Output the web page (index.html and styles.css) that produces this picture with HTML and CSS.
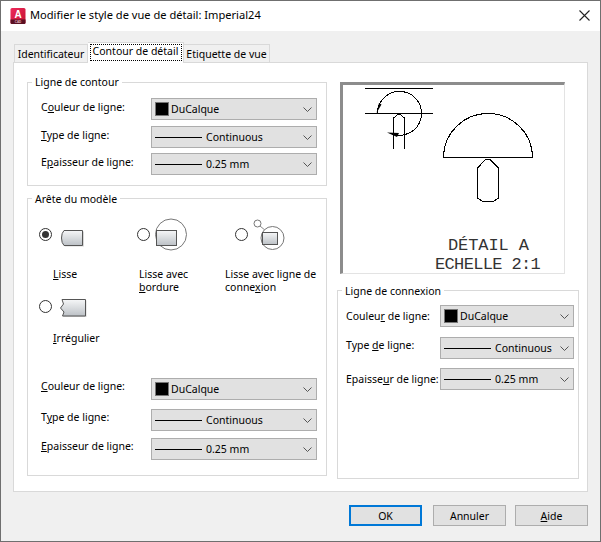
FILE: index.html
```html
<!DOCTYPE html>
<html lang="fr">
<head>
<meta charset="utf-8">
<title>Modifier le style de vue de détail</title>
<link rel="stylesheet" href="styles.css">
</head>
<body>
<svg class="defs" width="0" height="0">
  <defs>
    <linearGradient id="shade" x1="0" y1="0" x2="0" y2="1">
      <stop offset="0" stop-color="#f6f7f8"/>
      <stop offset="1" stop-color="#bcc1c6"/>
    </linearGradient>
    <linearGradient id="logo" x1="0" y1="0" x2="1" y2="1">
      <stop offset="0" stop-color="#ee2a5c"/>
      <stop offset="1" stop-color="#c4112f"/>
    </linearGradient>
    <symbol id="chev" viewBox="0 0 9 5">
      <path d="M0.5 0.5 L4.5 4.5 L8.5 0.5" fill="none" stroke="#555" stroke-width="1"/>
    </symbol>
  </defs>
</svg>
<div class="window">
  <header class="titlebar">
    <svg class="app-icon" viewBox="0 0 16 16" width="16" height="16">
      <rect x="0.5" y="0" width="15" height="16" rx="1.5" fill="url(#logo)"/>
      <path d="M0.5 11.5 H15.5 V14.5 a1.5 1.5 0 0 1 -1.5 1.5 H2 a1.5 1.5 0 0 1 -1.5 -1.5Z" fill="#5a1022"/>
      <text x="8" y="9.5" class="logo-a">A</text>
      <text x="8" y="15" class="logo-cad">CAD</text>
    </svg>
    <div class="title">Modifier le style de vue de détail: Imperial24</div>
    <svg class="close" viewBox="0 0 11 11" width="11" height="11">
      <path d="M0.5 0.5 L10.5 10.5 M10.5 0.5 L0.5 10.5" stroke="#222" stroke-width="1.1" fill="none"/>
    </svg>
  </header>

  <main class="content">
    <nav class="tabs">
      <div class="tab tab-first">Identificateur</div>
      <div class="tab tab-active"><span class="focus">Contour de détail</span></div>
      <div class="tab tab-last">Etiquette de vue</div>
    </nav>

    <section class="panel">
      <div class="col-left">
        <fieldset class="group group-outline">
          <legend>Ligne de contour</legend>
          <div class="row">
            <label>C<u>o</u>uleur de ligne:</label>
            <div class="combo"><span class="swatch"></span><span class="combo-text">DuCalque</span><svg class="chev"><use href="#chev"/></svg></div>
          </div>
          <div class="row">
            <label><u>T</u>ype de ligne:</label>
            <div class="combo"><span class="line"></span><span class="combo-text">Continuous</span><svg class="chev"><use href="#chev"/></svg></div>
          </div>
          <div class="row row-tight">
            <label>E<u>p</u>aisseur de ligne:</label>
            <div class="combo"><span class="line"></span><span class="combo-text">0.25 mm</span><svg class="chev"><use href="#chev"/></svg></div>
          </div>
        </fieldset>

        <fieldset class="group group-edge">
          <legend>Arête du modèle</legend>
          <div class="options">
            <div class="option opt-1">
              <div class="opt-head">
                <span class="radio radio-on"></span>
                <svg class="opt-icon" viewBox="54 214 36 40" width="36" height="40">
                  <path d="M65 231.5 H84 V246.5 H65 Q62.5 244 62.5 239 Q62.5 234 65 231.5Z" fill="#d8d8d8"/>
                  <path d="M64 230.5 H82.5 V245.5 H64 Q61.5 243 61.5 238 Q61.5 233 64 230.5Z" fill="url(#shade)" stroke="#555"/>
                </svg>
              </div>
              <div class="opt-label"><u>L</u>isse</div>
            </div>
            <div class="option opt-2">
              <div class="opt-head">
                <span class="radio"></span>
                <svg class="opt-icon" viewBox="152 214 40 40" width="40" height="40">
                  <circle cx="171" cy="234.5" r="15.5" fill="#fff" stroke="#777"/>
                  <rect x="156.5" y="230.5" width="20" height="15" fill="url(#shade)" stroke="#555"/>
                </svg>
              </div>
              <div class="opt-label">Lisse avec<br><u>b</u>ordure</div>
            </div>
            <div class="option opt-3">
              <div class="opt-head">
                <span class="radio"></span>
                <svg class="opt-icon" viewBox="250 214 40 40" width="40" height="40">
                  <circle cx="257.5" cy="223.5" r="3.5" fill="#fff" stroke="#777"/>
                  <path d="M260 226 L266 231" stroke="#888" fill="none"/>
                  <circle cx="272.5" cy="238" r="11.5" fill="#fff" stroke="#777"/>
                  <rect x="262.5" y="232.5" width="15" height="12" fill="url(#shade)" stroke="#555"/>
                </svg>
              </div>
              <div class="opt-label">Lisse avec ligne de<br>conne<u>x</u>ion</div>
            </div>
            <div class="option opt-1">
              <div class="opt-head">
                <span class="radio"></span>
                <svg class="opt-icon" viewBox="54 286 36 40" width="36" height="40">
                  <path d="M63 300.5 H86.5 V317 H63 L64 313 L61 309 L64 305Z" fill="#d8d8d8"/>
                  <path d="M62 299.5 H85.5 V316 H62.5 L64 312 L60.5 308 L63.5 304Z" fill="url(#shade)" stroke="#555"/>
                </svg>
              </div>
              <div class="opt-label"><u>I</u>rrégulier</div>
            </div>
          </div>
          <div class="edge-rows">
            <div class="row">
              <label><u>C</u>ouleur de ligne:</label>
              <div class="combo"><span class="swatch"></span><span class="combo-text">DuCalque</span><svg class="chev"><use href="#chev"/></svg></div>
            </div>
            <div class="row row-wide">
              <label>T<u>y</u>pe de ligne:</label>
              <div class="combo"><span class="line"></span><span class="combo-text">Continuous</span><svg class="chev"><use href="#chev"/></svg></div>
            </div>
            <div class="row row-mid">
              <label><u>E</u>paisseur de ligne:</label>
              <div class="combo"><span class="line"></span><span class="combo-text">0.25 mm</span><svg class="chev"><use href="#chev"/></svg></div>
            </div>
          </div>
        </fieldset>
      </div>

      <div class="col-right">
        <div class="preview">
          <svg class="drawing" viewBox="344 85 221 189" width="221" height="189">
            <g fill="none" stroke="#000" stroke-width="1" shape-rendering="crispEdges">
              <path d="M366 88.5 H434 M366 113.5 H434"/>
              <path d="M378.5 113 A22 22 0 1 1 393 134"/>
              <path d="M394.5 149 V118 L400 113.5 L405.5 118 V149"/>
              <path d="M444.5 157.5 A44.5 44 0 0 1 533.5 157.5 Z"/>
              <path d="M478.5 168 L486.5 159.5 H491 L499.5 168 V198 L495 201 H483 L478.5 198 Z"/>
            </g>
            <path d="M377.5 113 L380 103 L382.5 104.500 Z" fill="#000"/>
            <path d="M388 132.500 L400 133 L398 137 Z" fill="#000"/>
            <text x="449" y="250" class="cad-text cad-1">DÉTAIL A</text>
            <text x="436" y="269" class="cad-text cad-2">ECHELLE 2:1</text>
          </svg>
        </div>
        <fieldset class="group group-link">
          <legend>Ligne de connexion</legend>
          <div class="row">
            <label class="lab-low">Couleu<u>r</u> de ligne:</label>
            <div class="combo"><span class="swatch"></span><span class="combo-text">DuCalque</span><svg class="chev"><use href="#chev"/></svg></div>
          </div>
          <div class="row row-wider">
            <label>Type <u>d</u>e ligne:</label>
            <div class="combo"><span class="line"></span><span class="combo-text">Continuous</span><svg class="chev"><use href="#chev"/></svg></div>
          </div>
          <div class="row row-wide2">
            <label class="lab-low">Epaisse<u>u</u>r de ligne:</label>
            <div class="combo"><span class="line"></span><span class="combo-text">0.25 mm</span><svg class="chev"><use href="#chev"/></svg></div>
          </div>
        </fieldset>
      </div>
    </section>

    <footer class="buttons">
      <button class="btn btn-default">OK</button>
      <button class="btn">Annuler</button>
      <button class="btn btn-help"><u>A</u>ide</button>
    </footer>
  </main>
</div>
</body>
</html>
```
FILE: styles.css
```css
* { box-sizing: border-box; }
html, body { margin: 0; padding: 0; background: #f0f0f0; }
body { font: 10.5px/13px "Noto Sans", sans-serif; color: #000; }
u { text-underline-offset: 1px; }
.defs { position: absolute; }

.window {
  width: 601px;
  height: 542px;
  border: 1px solid #6f6f6f;
  display: flex;
  flex-direction: column;
  overflow: hidden;
}

.titlebar {
  height: 30px;
  background: #fff;
  display: flex;
  align-items: center;
  padding-left: 9px;
  flex: none;
}
.app-icon { flex: none; margin-top: -1px; }
.logo-a { font: bold 10px "Liberation Sans", sans-serif; fill: #fff; text-anchor: middle; }
.logo-cad { font: bold 3px "Liberation Sans", sans-serif; fill: #e8b9c2; text-anchor: middle; }
.title { margin-left: 4px; font-size: 11.1px; line-height: 16px; margin-top: -2px; }
.close { margin-left: auto; margin-right: 10px; margin-top: -1px; }

.content {
  flex: 1;
  background: #f0f0f0;
  padding: 11px 12px 0;
  display: flex;
  flex-direction: column;
}

.tabs { display: flex; height: 20px; align-items: flex-end; padding-left: 1px; position: relative; z-index: 1; flex: none; }
.tab {
  height: 18px;
  border: 1px solid #d9d9d9;
  border-bottom: 0;
  background: #f0f0f0;
  white-space: nowrap;
  display: flex;
  justify-content: center;
  padding-top: 3px;
}
.tab-first { width: 74px; }
.tab-last { width: 86px; border-left: 0; }
.tab-active {
  width: 96px;
  height: 21px;
  margin-bottom: -1px;
  background: #fff;
  padding-top: 2px;
  border-left: 0;
}
.focus { display: block; width: 90px; text-align: center; height: 15px; outline: 1px dotted #000; }

.panel {
  height: 430px;
  flex: none;
  background: #fff;
  border: 1px solid #d9d9d9;
  padding: 12px 0 0 13px;
  display: flex;
  gap: 10px;
}
.col-left { width: 300px; display: flex; flex-direction: column; gap: 5px; flex: none; }
.col-right { width: 242px; flex: none; }

.group {
  margin: 0;
  padding: 0 9px 0 13px;
  border: 1px solid #d9d9d9;
  min-width: 0;
}
.group legend { margin-left: -9px; padding: 0 3px; height: 14px; line-height: 14px; }
.group-edge legend, .group-link legend { padding-top: 1px; }
.group-outline { height: 111px; padding-top: 9px; }
.group-edge { height: 285px; padding-top: 9px; }
.group-link { height: 196px; padding: 8px 4px 0 8px; margin-top: 9px; }
.group-link legend { margin-left: -4px; }

.row { display: flex; align-items: center; height: 22px; margin-top: 6px; }
.row:first-of-type { margin-top: 0; }
.row-tight { margin-top: 5px; }
.row-wide { margin-top: 9px; }
.row-mid { margin-top: 7px; }
.row-wider { margin-top: 10px; }
.row-wide2 { margin-top: 9px; }
.row label { width: 110px; flex: none; margin-top: -5px; white-space: nowrap; }
.group-outline .row label { margin-top: -4px; }
.group-link .row label { width: 94px; }
.group-link .row label.lab-low { margin-top: 1px; }

.combo {
  width: 166px;
  height: 22px;
  flex: none;
  background: #e1e1e1;
  border: 1px solid #adadad;
  display: flex;
  align-items: center;
  padding-left: 3px;
}
.group-link .combo { width: 134px; }
.swatch { width: 14px; height: 14px; background: #000; border: 1px solid #777; flex: none; }
.line { width: 47px; height: 1px; background: #000; flex: none; }
.combo-text { margin-left: 2px; }
.line + .combo-text { margin-left: 4px; }
.chev { width: 9px; height: 5px; margin-left: auto; margin-right: 4px; flex: none; }

.options {
  display: grid;
  grid-template-columns: 98px 89px 90px;
  grid-auto-rows: 72px;
  margin-left: -2px;
}
.option { min-width: 0; white-space: nowrap; }
.opt-head { height: 40px; display: flex; align-items: center; }
.opt-icon { flex: none; }
.opt-label { margin-top: 14px; }
.opt-1 .opt-head { gap: 2px; }
.opt-1 .opt-label { margin-left: 14px; }
.opt-1:nth-child(4) .opt-label { margin-top: 6px; }
.opt-2 .opt-head { gap: 2px; }
.opt-2 .opt-label { margin-left: 2px; }
.opt-3 .opt-head { gap: 2px; margin-left: 9px; }
.opt-3 .opt-label { margin-left: -1px; }

.edge-rows { margin-top: 20px; }

.radio {
  width: 13px;
  height: 13px;
  border: 1px solid #333;
  border-radius: 50%;
  background: #fff;
  flex: none;
  display: flex;
  align-items: center;
  justify-content: center;
}
.radio-on::after { content: ""; width: 7px; height: 7px; border-radius: 50%; background: #333; }

.preview {
  width: 225px;
  height: 192px;
  margin: 7px 0 0 3px;
  background: #fff;
  border-style: solid;
  border-width: 3px 1px 1px 3px;
  border-color: #8c8c8c #e3e3e3 #e3e3e3 #8c8c8c;
}
.drawing { display: block; }
.cad-text { font-family: "Liberation Mono", monospace; font-size: 17px; fill: #333; }
.cad-1 { letter-spacing: -0.1px; }
.cad-2 { letter-spacing: -0.65px; }

.buttons {
  display: flex;
  justify-content: flex-end;
  gap: 11px;
  margin-top: 13px;
  flex: none;
}
.btn {
  width: 73px;
  height: 21px;
  background: #e1e1e1;
  border: 1px solid #adadad;
  font: inherit;
  padding: 1px 0 0;
  color: #000;
}
.btn-help { margin-left: -2px; }
.btn-default { border: 2px solid #0078d7; }
```
